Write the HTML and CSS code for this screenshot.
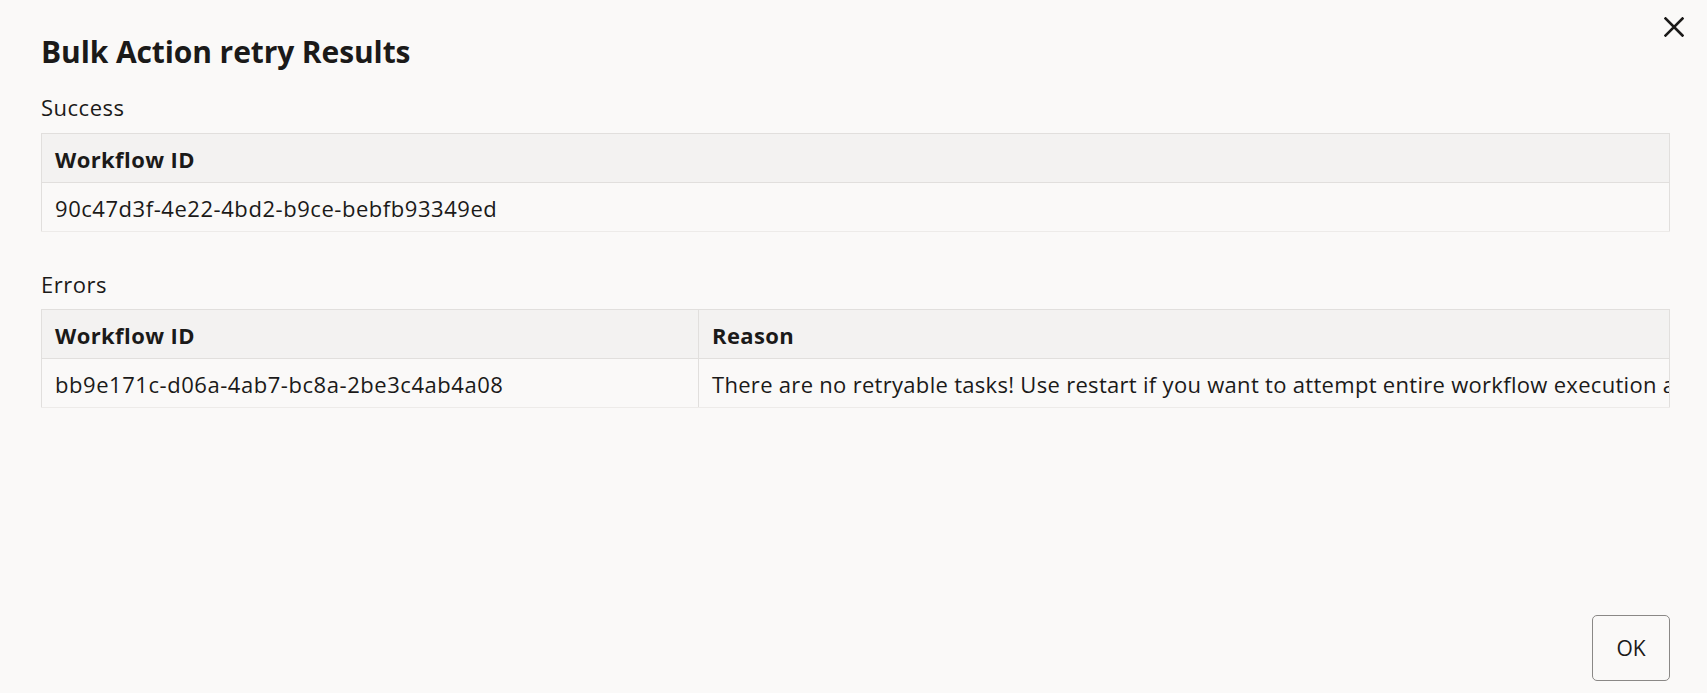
FILE: index.html
```html
<!DOCTYPE html>
<html lang="en">
<head>
  <meta charset="UTF-8" />
  <meta name="viewport" content="width=device-width, initial-scale=1.0" />
  <title>Bulk Action retry Results</title>
  <link rel="stylesheet" href="styles.css">
</head>
<body>
  <!-- Results dialog -->
  <div class="dialog">
    <button class="close" type="button" aria-label="Close">
      <svg width="20" height="20" viewBox="0 0 20 20">
        <path d="M1.5 1.5 L18.5 18.5 M18.5 1.5 L1.5 18.5" stroke="#1b1a19" stroke-width="2.6" stroke-linecap="square" fill="none" />
      </svg>
    </button>

    <h2 class="title">Bulk Action retry Results</h2>

    <div class="section">
      <div class="label">Success</div>
      <table class="results">
        <colgroup><col /></colgroup>
        <thead>
          <tr><th>Workflow ID</th></tr>
        </thead>
        <tbody>
          <tr><td>90c47d3f-4e22-4bd2-b9ce-bebfb93349ed</td></tr>
        </tbody>
      </table>
    </div>

    <div class="section errors">
      <div class="label">Errors</div>
      <table class="results">
        <colgroup><col class="col-id" /><col /></colgroup>
        <thead>
          <tr><th>Workflow ID</th><th>Reason</th></tr>
        </thead>
        <tbody>
          <tr>
            <td>bb9e171c-d06a-4ab7-bc8a-2be3c4ab4a08</td>
            <td class="reason">There are no retryable tasks! Use restart if you want to attempt entire workflow execution again.</td>
          </tr>
        </tbody>
      </table>
    </div>

    <div class="footer">
      <button class="ok" type="button">OK</button>
    </div>
  </div>
</body>
</html>
```

FILE: styles.css
```css
body {
  margin: 0;
  background: #faf9f8;
  color: #1b1a19;
  font-family: 'Open Sans', 'Noto Sans', sans-serif;
  overflow: hidden;
}
.dialog {
  position: relative;
  display: flex;
  flex-direction: column;
  height: 100vh;
  box-sizing: border-box;
  padding: 30px 37px 12px 41px;
}
.title {
  margin: 0 0 19px 0;
  font-size: 30px;
  line-height: 44px;
  font-weight: 700;
  letter-spacing: -0.1px;
}
.label {
  font-size: 22px;
  line-height: 28px;
  letter-spacing: 0.5px;
  margin-bottom: 12px;
}
.errors {
  margin-top: 38px;
}
.errors .label {
  margin-bottom: 11px;
}
.results {
  width: 100%;
  table-layout: fixed;
  border-collapse: collapse;
  border: 1px solid #e1dfdd;
  font-size: 22px;
  line-height: 28px;
  letter-spacing: 0.55px;
}
.results .col-id {
  width: 657px;
}
.results th {
  background: #f3f2f1;
  text-align: left;
  font-weight: 700;
  letter-spacing: 0.4px;
  padding: 11px 13px 9px 13px;
  border-bottom: 1px solid #e1dfdd;
}
.results td {
  padding: 11px 13px 9px 13px;
  white-space: nowrap;
  overflow: hidden;
  border-bottom: 1px solid #edebe9;
}
.results td.reason {
  letter-spacing: 0.3px;
  padding-right: 0;
}
.results th + th,
.results td + td {
  border-left: 1px solid #e1dfdd;
}
.close {
  position: absolute;
  top: 17px;
  right: 23px;
  width: 20px;
  height: 20px;
  padding: 0;
  border: none;
  background: none;
  cursor: pointer;
}
.close svg {
  display: block;
}
.footer {
  margin-top: auto;
  display: flex;
  justify-content: flex-end;
}
.ok {
  width: 78px;
  height: 66px;
  border: 1px solid #8a8886;
  border-radius: 5px;
  background: transparent;
  color: #1b1a19;
  font-family: inherit;
  font-size: 21px;
  cursor: pointer;
}
```
